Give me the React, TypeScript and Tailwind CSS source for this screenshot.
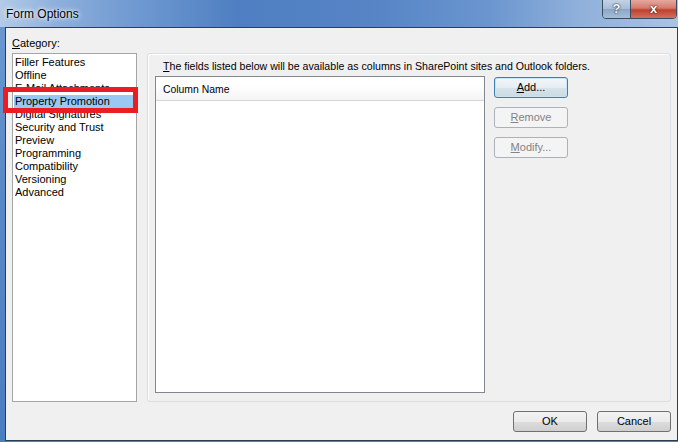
import React from "react";

const categories = [
  "Filler Features",
  "Offline",
  "E-Mail Attachments",
  "Property Promotion",
  "Digital Signatures",
  "Security and Trust",
  "Preview",
  "Programming",
  "Compatibility",
  "Versioning",
  "Advanced",
];

const selected = "Property Promotion";

const btnBase =
  "h-[21px] w-[74px] rounded-[3px] border text-[11px] leading-[19px] text-center";
const btnNormal =
  "border-[#707070] bg-[linear-gradient(to_bottom,#f2f2f2_0%,#ebebeb_50%,#dddddd_51%,#cfcfcf_100%)] text-black";
const btnFocus =
  "border-[#3c7fb1] bg-[linear-gradient(to_bottom,#f1f6f9_0%,#e6eef3_50%,#d7e3ea_51%,#cbdae3_100%)] text-black shadow-[inset_0_0_0_1px_#c6e6f7]";
const btnDisabled = "border-[#adb2b5] bg-[#f4f4f4] text-[#838383]";

function Accel({ ch, rest }: { ch: string; rest: string }) {
  return (
    <>
      <span className="underline underline-offset-[1px]">{ch}</span>
      {rest}
    </>
  );
}

export default function App() {
  return (
    <div className="relative w-[678px] h-[442px] overflow-hidden bg-[linear-gradient(to_bottom,#6d9ad2_0%,#5a89c7_40%,#4c7dc1_100%)] font-['Liberation_Sans',Arial,sans-serif] text-black">
      {/* title bar */}
      <div className="flex h-[27px] items-start bg-[linear-gradient(to_right,#b4cbe8_0%,#8fb0dc_8%,#6f99d1_20%,#4f7fc2_35%,#5684c5_55%,#6a95cf_72%,#8fb0db_85%,#a9c3e3_100%)]">
        <div className="flex h-[27px] items-center pl-[6px] text-[12px] [text-shadow:0_0_6px_#ffffff,0_0_3px_#ffffff]">
          Form Options
        </div>
        <div className="ml-auto mr-[1px] mt-[-1px] flex h-[20px] overflow-hidden rounded-b-[4px] border border-[#3a4a60]">
          <div className="flex w-[27px] items-center justify-center bg-[linear-gradient(to_bottom,#c3d3e6_0%,#a7bcd5_50%,#8ba6c6_51%,#a6bdd8_100%)] text-[13px] font-bold text-white [text-shadow:0_0_2px_#1d2f48,0_0_1px_#1d2f48]">
            ?
          </div>
          <div className="w-[1px] bg-[#3a4a60]" />
          <div className="flex w-[45px] items-center justify-center bg-[linear-gradient(to_bottom,#e6a99f_0%,#d47a6c_45%,#c0402f_55%,#d0705f_100%)] text-[13px] font-bold text-white [text-shadow:0_0_2px_#3b0d07,0_0_1px_#3b0d07]">
            x
          </div>
        </div>
      </div>

      {/* client area */}
      <div className="ml-[5px] flex h-[414px] w-[673px] flex-col border border-[#2c3f58] bg-[#f0f0f0]">
        <div className="flex pl-[6px]">
          {/* category column */}
          <div className="flex flex-col pt-[9px]">
            <div className="h-[16px] text-[11px] leading-[13px]">
              <Accel ch="C" rest="ategory:" />
            </div>
            <div className="h-[349px] w-[125px] border border-[#a5a5a5] bg-white p-[1px]">
              <div className="pt-[1px]">
                {categories.map((c) => (
                  <div
                    key={c}
                    className={
                      "h-[13px] pl-[1px] text-[11px] leading-[13px] whitespace-nowrap " +
                      (c === selected ? "bg-[#99c9f2]" : "")
                    }
                  >
                    {c}
                  </div>
                ))}
              </div>
            </div>
          </div>

          {/* property promotion group */}
          <div className="ml-[10px] mt-[25px] h-[349px] w-[524px] rounded-[3px] border border-[#d5dfe5] pl-[7px] shadow-[inset_1px_1px_0_#ffffff]">
            <div className="pl-[8px] pt-[6px] text-[10.6px] leading-[13px] whitespace-nowrap">
              <Accel
                ch="T"
                rest="he fields listed below will be available as columns in SharePoint sites and Outlook folders."
              />
            </div>
            <div className="mt-[3px] flex">
              <div className="h-[317px] w-[330px] border border-[#828790] bg-white">
                <div className="h-[24px] border-b border-[#d5d5d5] bg-[linear-gradient(to_bottom,#ffffff_0%,#ffffff_40%,#f3f4f6_100%)] pl-[7px] pt-[6px] text-[10.4px] leading-[13px]">
                  Column Name
                </div>
              </div>
              <div className="ml-[9px] flex flex-col gap-[9px] pt-[1px]">
                <button className={btnBase + " " + btnFocus}>
                  <Accel ch="A" rest="dd..." />
                </button>
                <button className={btnBase + " " + btnDisabled} disabled>
                  <Accel ch="R" rest="emove" />
                </button>
                <button className={btnBase + " " + btnDisabled} disabled>
                  <Accel ch="M" rest="odify..." />
                </button>
              </div>
            </div>
          </div>
        </div>

        {/* dialog buttons */}
        <div className="mt-[9px] flex justify-end gap-[10px] pr-[6px]">
          <button className={btnBase + " " + btnNormal}>OK</button>
          <button className={btnBase + " " + btnNormal}>Cancel</button>
        </div>
      </div>

      {/* red annotation box */}
      <div className="absolute left-[3px] top-[87px] h-[26px] w-[135px] border-[5px] border-[#ea1c24]" />
    </div>
  );
}
